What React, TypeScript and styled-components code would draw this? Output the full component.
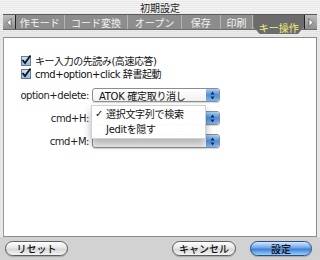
import React from "react";
import styled, { createGlobalStyle } from "styled-components";

const Global = createGlobalStyle`
  html, body { margin: 0; padding: 0; background: #d6d6d6; }
  body { font-family: "DejaVu Sans", "Noto Sans CJK JP", sans-serif; }
`;

const Window = styled.div`
  width: 320px;
  height: 260px;
  display: flex;
  flex-direction: column;
  background: repeating-linear-gradient(#ececec 0 1px, #e2e2e2 1px 2px);
  overflow: hidden;
  position: relative;
`;

const TitleBar = styled.div`
  height: 14px;
  display: flex;
  align-items: center;
  justify-content: center;
  font-size: 10px;
  color: #222;
  font-family: "Noto Sans CJK JP", sans-serif;
  background: repeating-linear-gradient(#f4f4f4 0 1px, #e8e8e8 1px 2px);
`;

const TabStrip = styled.div`
  height: 14px;
  margin: 0 3px 0 3px;
  display: flex;
  align-items: stretch;
  background: #8d8d8d;
  border-top: 1px solid #5a5a5a;
  border-bottom: 1px solid #6a6a6a;
  position: relative;
  z-index: 2;
`;

const ArrowBtn = styled.div<{ $side: "l" | "r" }>`
  width: 12px;
  display: flex;
  align-items: center;
  justify-content: center;
  background: linear-gradient(#bdbdbd, #8f8f8f);
  border-${(p) => (p.$side === "l" ? "right" : "left")}: 1px solid #222;
`;

const Tab = styled.div<{ $w: number; $active?: boolean }>`
  width: ${(p) => p.$w}px;
  display: flex;
  align-items: center;
  justify-content: center;
  font-family: "Noto Sans CJK JP", sans-serif;
  font-size: 10px;
  color: ${(p) => (p.$active ? "#f4f07a" : "#f2f2f2")};
  border-right: 1px solid #b4b4b4;
  ${(p) =>
    p.$active
      ? `
    background: #6c6c6c;
    border-right: none;
    margin-bottom: -5px;
    padding-top: 5px;
    clip-path: polygon(0 0, 100% 0, 100% 60%, 88% 100%, 12% 100%, 0 60%);
  `
      : ""}
`;

const TabSpacer = styled.div`
  flex: 1;
`;

const Body = styled.div`
  flex: 1;
  padding: 7px 3px 0 3px;
  display: flex;
  flex-direction: column;
`;

const Panel = styled.div`
  height: 200px;
  background: #fff;
  border: 1px solid #8a8a8a;
  border-left-color: #9a9a9a;
  padding: 16px 0 0 16px;
  position: relative;
  box-sizing: border-box;
`;

const CheckRow = styled.label`
  display: flex;
  align-items: center;
  gap: 3px;
  height: 13px;
  font-size: 10px;
  letter-spacing: -0.45px;
  color: #111;
  font-family: "DejaVu Sans", "Noto Sans CJK JP", sans-serif;
  margin-left: 1px;
`;

const CheckBox = styled.span`
  width: 8px;
  height: 8px;
  border: 1px solid #6d7a86;
  background: linear-gradient(#cfe3f7, #8cb9e6);
  position: relative;
  display: inline-block;
  margin-right: 1px;
  svg { position: absolute; left: -1px; top: -3px; }
`;

const Form = styled.div`
  display: grid;
  grid-template-columns: 72px 128px;
  row-gap: 9px;
  column-gap: 3px;
  align-items: center;
  margin-top: 8px;
  margin-left: -3px;
`;

const Label = styled.div`
  text-align: right;
  font-size: 10px;
  letter-spacing: -0.45px;
  color: #222;
  font-family: "DejaVu Sans", sans-serif;
`;

const Popup = styled.div`
  height: 14px;
  box-sizing: border-box;
  border: 1px solid #8d8d8d;
  border-radius: 3px;
  background: linear-gradient(#ffffff, #f1f1f1);
  box-shadow: 0 1px 1px rgba(0,0,0,0.15);
  display: flex;
  align-items: center;
  font-size: 10px;
  letter-spacing: -0.3px;
  font-family: "DejaVu Sans", "Noto Sans CJK JP", sans-serif;
  color: #111;
  padding-left: 6px;
  position: relative;
`;

const PopupText = styled.span`
  flex: 1;
  white-space: nowrap;
`;

const PopupArrows = styled.span`
  width: 13px;
  height: 12px;
  border-radius: 0 3px 3px 0;
  background: linear-gradient(#a9cdf3, #4f8fdc 50%, #7fb3ee);
  display: flex;
  align-items: center;
  justify-content: center;
`;

const Menu = styled.div`
  position: absolute;
  left: 87px;
  top: 67px;
  width: 113px;
  padding: 0 0 2px;
  background: rgba(255,255,255,0.97);
  border: 1px solid #d0d0d0;
  box-shadow: 0 5px 8px rgba(0,0,0,0.3);
  z-index: 3;
`;

const MenuItem = styled.div`
  height: 15px;
  display: flex;
  align-items: center;
  font-size: 10px;
  letter-spacing: -0.3px;
  color: #111;
  font-family: "DejaVu Sans", "Noto Sans CJK JP", sans-serif;
`;

const MenuCheck = styled.span`
  width: 13px;
  padding-left: 3px;
  box-sizing: border-box;
  width: 14px;
  font-size: 10px;
`;

const Footer = styled.div`
  height: 23px;
  display: flex;
  align-items: center;
  padding: 0 8px 0 5px;
  background: #d2d2d2;
`;

const Button = styled.div<{ $w: number; $default?: boolean }>`
  width: ${(p) => p.$w}px;
  height: 15px;
  box-sizing: border-box;
  border-radius: 8px;
  border: 1px solid ${(p) => (p.$default ? "#2a4f86" : "#5e5e5e")};
  background: ${(p) =>
    p.$default
      ? "linear-gradient(#d7e9fb, #6aa5e8 45%, #3d7fd6 55%, #9cd0fa)"
      : "linear-gradient(#ffffff, #e7e7e7 45%, #d6d6d6 55%, #f5f5f5)"};
  display: flex;
  align-items: center;
  justify-content: center;
  font-size: 10px;
  font-weight: 500;
  font-family: "Noto Sans CJK JP", sans-serif;
  color: #111;
  box-shadow: 0 1px 1px rgba(0,0,0,0.2);
`;

const Gap = styled.div<{ $w?: number }>`
  ${(p) => (p.$w ? `width: ${p.$w}px;` : "flex: 1;")}
`;

const Arrows = () => (
  <svg width="5" height="9" viewBox="0 0 5 9">
    <path d="M2.5 0.5 L4.5 3.5 L0.5 3.5 Z" fill="#102a50" />
    <path d="M2.5 8.5 L4.5 5.5 L0.5 5.5 Z" fill="#102a50" />
  </svg>
);

const Check = () => (
  <svg width="11" height="11" viewBox="0 0 11 11">
    <path d="M1.5 6 L4 9 L9.5 1.5" stroke="#111" strokeWidth="1.8" fill="none" />
  </svg>
);

export default function App() {
  return (
    <Window>
      <Global />
      <TitleBar>初期設定</TitleBar>
      <TabStrip>
        <ArrowBtn $side="l">
          <svg width="6" height="9" viewBox="0 0 6 9"><path d="M5 0.5 L1 4.5 L5 8.5 Z" fill="#fff" stroke="#333" strokeWidth="0.6" /></svg>
        </ArrowBtn>
        <Tab $w={48}>作モード</Tab>
        <Tab $w={63}>コード変換</Tab>
        <Tab $w={53}>オープン</Tab>
        <Tab $w={38}>保存</Tab>
        <Tab $w={32}>印刷</Tab>
        <Tab $w={51} $active>キー操作</Tab>
        <TabSpacer />
        <ArrowBtn $side="r">
          <svg width="6" height="9" viewBox="0 0 6 9"><path d="M1 0.5 L5 4.5 L1 8.5 Z" fill="#fff" stroke="#333" strokeWidth="0.6" /></svg>
        </ArrowBtn>
      </TabStrip>
      <Body>
        <Panel>
          <CheckRow>
            <CheckBox><Check /></CheckBox>
            キー入力の先読み(高速応答)
          </CheckRow>
          <CheckRow>
            <CheckBox><Check /></CheckBox>
            cmd+option+click 辞書起動
          </CheckRow>
          <Form>
            <Label>option+delete:</Label>
            <Popup><PopupText>ATOK 確定取り消し</PopupText><PopupArrows><Arrows /></PopupArrows></Popup>
            <Label>cmd+H:</Label>
            <Popup><PopupText></PopupText><PopupArrows><Arrows /></PopupArrows></Popup>
            <Label>cmd+M:</Label>
            <Popup><PopupText></PopupText><PopupArrows><Arrows /></PopupArrows></Popup>
          </Form>
          <Menu>
            <MenuItem><MenuCheck>✓</MenuCheck>選択文字列で検索</MenuItem>
            <MenuItem><MenuCheck></MenuCheck>Jeditを隠す</MenuItem>
          </Menu>
        </Panel>
      </Body>
      <Footer>
        <Button $w={63}>リセット</Button>
        <Gap />
        <Button $w={64}>キャンセル</Button>
        <Gap $w={14} />
        <Button $w={62} $default>設定</Button>
      </Footer>
    </Window>
  );
}
